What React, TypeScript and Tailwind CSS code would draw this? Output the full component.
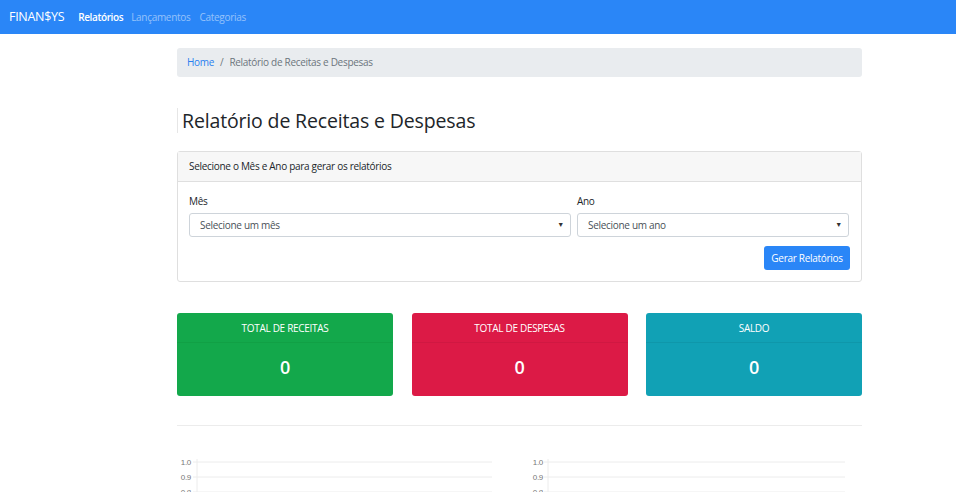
import React from "react";

function Chart({ labelX, gridStart, gridEnd }: { labelX: number; gridStart: number; gridEnd: number }) {
  const rows = [
    { l: "1.0", y: 7 },
    { l: "0.9", y: 22 },
    { l: "0.8", y: 37 },
  ];
  return (
    <svg width="343" height="40" className="block">
      {rows.map((r) => (
        <g key={r.l}>
          <line x1={gridStart - 4} x2={gridEnd} y1={r.y} y2={r.y} stroke="#ececec" strokeWidth="1" />
          <text x={labelX} y={r.y + 3} textAnchor="end" fontSize="8" fill="#777" fontFamily="Liberation Sans, Arial, sans-serif">
            {r.l}
          </text>
        </g>
      ))}
      <line x1={gridStart} x2={gridStart} y1={4} y2={40} stroke="#ececec" strokeWidth="1" />
    </svg>
  );
}

function StatCard({ title, bg, head }: { title: string; bg: string; head: string }) {
  return (
    <div className={`w-[216px] h-[83px] rounded-[3px] ${bg} text-white flex flex-col`}>
      <div className={`h-[30px] pt-[2px] flex items-center justify-center text-[10px] tracking-[-0.3px] border-b ${head}`}>{title}</div>
      <div className="flex-1 pb-[5px] flex items-center justify-center text-[18px] font-semibold">0</div>
    </div>
  );
}

export default function App() {
  return (
    <div className="relative min-h-[492px] bg-white font-['Open_Sans',sans-serif] text-[#212529] overflow-hidden">
      <nav className="h-[34px] bg-[#2a86f7] flex items-center pl-[9px]">
        <span className="text-white text-[12.5px] tracking-[-0.3px] mr-[14px]">FINAN$YS</span>
        <span className="text-white text-[10px] font-semibold tracking-[-0.4px] mr-[8px]">Relatórios</span>
        <span className="text-white/50 text-[10px] tracking-[-0.3px] mr-[9px]">Lançamentos</span>
        <span className="text-white/50 text-[10px] tracking-[-0.3px]">Categorias</span>
      </nav>

      <div className="ml-[177px] w-[685px] text-[10px] tracking-[-0.3px]">
        <div className="mt-[14px] h-[29px] bg-[#e9ecef] rounded-[3px] flex items-center pl-[10px]">
          <span className="text-[#2a7ff0]">Home</span>
          <span className="text-[#6c757d] mx-[6px]">/</span>
          <span className="text-[#6c757d]">Relatório de Receitas e Despesas</span>
        </div>

        <div className="mt-[31px] border-l border-[#e6e6e6] pl-[4px] h-[25px] flex items-center">
          <h1 className="text-[19.5px] font-medium text-[#212529] tracking-[-0.15px]">Relatório de Receitas e Despesas</h1>
        </div>

        <div className="mt-[18px] border border-[#dfdfdf] rounded-[3px]">
          <div className="h-[30px] bg-[#f7f7f7] border-b border-[#dfdfdf] flex items-center pl-[11px]">
            Selecione o Mês e Ano para gerar os relatórios
          </div>
          <div className="px-[11px] pt-[12px] pb-[11px]">
            <div className="flex gap-[6px]">
              <div className="w-[382px]">
                <div className="h-[14px] leading-[14px]">Mês</div>
                <div className="mt-[5px] h-[24px] border border-[#ced4da] rounded-[3px] flex items-center justify-between pl-[10px] pr-[6px] text-[#495057]">
                  <span>Selecione um mês</span>
                  <span className="text-[7px] text-[#333]">▼</span>
                </div>
              </div>
              <div className="w-[272px]">
                <div className="h-[14px] leading-[14px]">Ano</div>
                <div className="mt-[5px] h-[24px] border border-[#ced4da] rounded-[3px] flex items-center justify-between pl-[10px] pr-[6px] text-[#495057]">
                  <span>Selecione um ano</span>
                  <span className="text-[7px] text-[#333]">▼</span>
                </div>
              </div>
            </div>
            <div className="flex justify-end mt-[9px]">
              <div className="h-[24px] w-[86px] bg-[#2a86f7] rounded-[3px] text-white flex items-center justify-center">
                Gerar Relatórios
              </div>
            </div>
          </div>
        </div>

        <div className="mt-[31px] flex justify-between">
          <StatCard title="TOTAL DE RECEITAS" bg="bg-[#13a84b]" head="border-[#11a045]" />
          <StatCard title="TOTAL DE DESPESAS" bg="bg-[#dc1a46]" head="border-[#d01842]" />
          <StatCard title="SALDO" bg="bg-[#11a1b5]" head="border-[#0f97aa]" />
        </div>

        <div className="mt-[29px] border-t border-[#ececec]" />

        <div className="mt-[29px] flex">
          <Chart labelX={14} gridStart={20} gridEnd={315} />
          <Chart labelX={23} gridStart={28} gridEnd={325} />
        </div>
      </div>

      <div className="absolute left-0 right-0 bottom-0 h-[3px] bg-[#1e1e1e]">
        <div className="absolute left-[28px] w-[28px] top-0 h-[3px] bg-[#5a5a5a]" />
      </div>
    </div>
  );
}
